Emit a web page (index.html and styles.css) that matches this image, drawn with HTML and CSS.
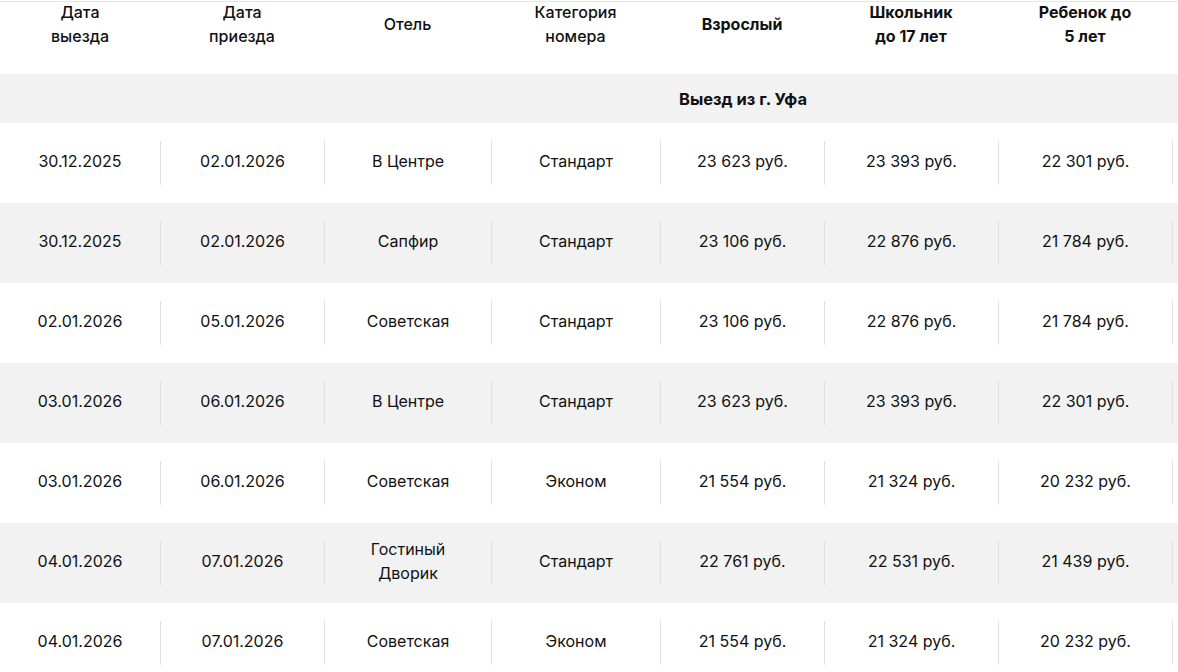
FILE: index.html
```html
<!DOCTYPE html>
<html lang="ru">
<head>
<meta charset="utf-8">
<title>Таблица цен</title>
<link rel="stylesheet" href="styles.css">
</head>
<body>
<div class="table">
  <div class="head">
    <div class="hc">Дата<br>выезда</div>
    <div class="hc">Дата<br>приезда</div>
    <div class="hc">Отель</div>
    <div class="hc">Категория<br>номера</div>
    <div class="hc bold">Взрослый</div>
    <div class="hc bold">Школьник<br>до 17 лет</div>
    <div class="hc bold">Ребенок до<br>5 лет</div>
    <div class="hc"></div>
  </div>
  <div class="group">Выезд из г. Уфа</div>

  <div class="row">
    <div class="c">30.12.2025</div><div class="c">02.01.2026</div><div class="c">В Центре</div><div class="c">Стандарт</div><div class="c">23 623 руб.</div><div class="c">23 393 руб.</div><div class="c">22 301 руб.</div><div class="c"></div>
  </div>
  <div class="row alt">
    <div class="c">30.12.2025</div><div class="c">02.01.2026</div><div class="c">Сапфир</div><div class="c">Стандарт</div><div class="c">23 106 руб.</div><div class="c">22 876 руб.</div><div class="c">21 784 руб.</div><div class="c"></div>
  </div>
  <div class="row">
    <div class="c">02.01.2026</div><div class="c">05.01.2026</div><div class="c">Советская</div><div class="c">Стандарт</div><div class="c">23 106 руб.</div><div class="c">22 876 руб.</div><div class="c">21 784 руб.</div><div class="c"></div>
  </div>
  <div class="row alt">
    <div class="c">03.01.2026</div><div class="c">06.01.2026</div><div class="c">В Центре</div><div class="c">Стандарт</div><div class="c">23 623 руб.</div><div class="c">23 393 руб.</div><div class="c">22 301 руб.</div><div class="c"></div>
  </div>
  <div class="row">
    <div class="c">03.01.2026</div><div class="c">06.01.2026</div><div class="c">Советская</div><div class="c">Эконом</div><div class="c">21 554 руб.</div><div class="c">21 324 руб.</div><div class="c">20 232 руб.</div><div class="c"></div>
  </div>
  <div class="row alt">
    <div class="c">04.01.2026</div><div class="c">07.01.2026</div><div class="c">Гостиный<br>Дворик</div><div class="c">Стандарт</div><div class="c">22 761 руб.</div><div class="c">22 531 руб.</div><div class="c">21 439 руб.</div><div class="c"></div>
  </div>
  <div class="row">
    <div class="c">04.01.2026</div><div class="c">07.01.2026</div><div class="c">Советская</div><div class="c">Эконом</div><div class="c">21 554 руб.</div><div class="c">21 324 руб.</div><div class="c">20 232 руб.</div><div class="c"></div>
  </div>
</div>
</body>
</html>
```

FILE: styles.css
```css
html, body {
  margin: 0;
  padding: 0;
  background: #ffffff;
  overflow: hidden;
}
body {
  font-family: Inter, "Noto Sans", "Liberation Sans", sans-serif;
  color: #111111;
  font-size: 16px;
}
.table {
  width: 1486px;
}
.head,
.row {
  display: grid;
  grid-template-columns: 160px 164px 167px 169px 164px 174px 174px 314px;
}
.head {
  height: 74px;
  box-sizing: border-box;
  padding-bottom: 26px;
  background: linear-gradient(#e6e6e6, #e6e6e6) 0 1px / 100% 1px no-repeat;
}
.hc {
  display: flex;
  align-items: center;
  justify-content: center;
  text-align: center;
  line-height: 24px;
  font-weight: 500;
}
.hc.bold {
  font-weight: 700;
}
.group {
  height: 49px;
  background: #f2f2f2;
  display: flex;
  align-items: center;
  justify-content: center;
  font-weight: 700;
  font-size: 16.5px;
}
.row {
  height: 80px;
  box-sizing: border-box;
  padding: 18px 0;
}
.row.alt {
  background: #f2f2f2;
}
.c {
  height: 44px;
  display: flex;
  align-items: center;
  justify-content: center;
  text-align: center;
  line-height: 24px;
  padding-bottom: 4px;
  box-sizing: border-box;
}
.c + .c {
  border-left: 1px solid #e0e0e0;
}
```
